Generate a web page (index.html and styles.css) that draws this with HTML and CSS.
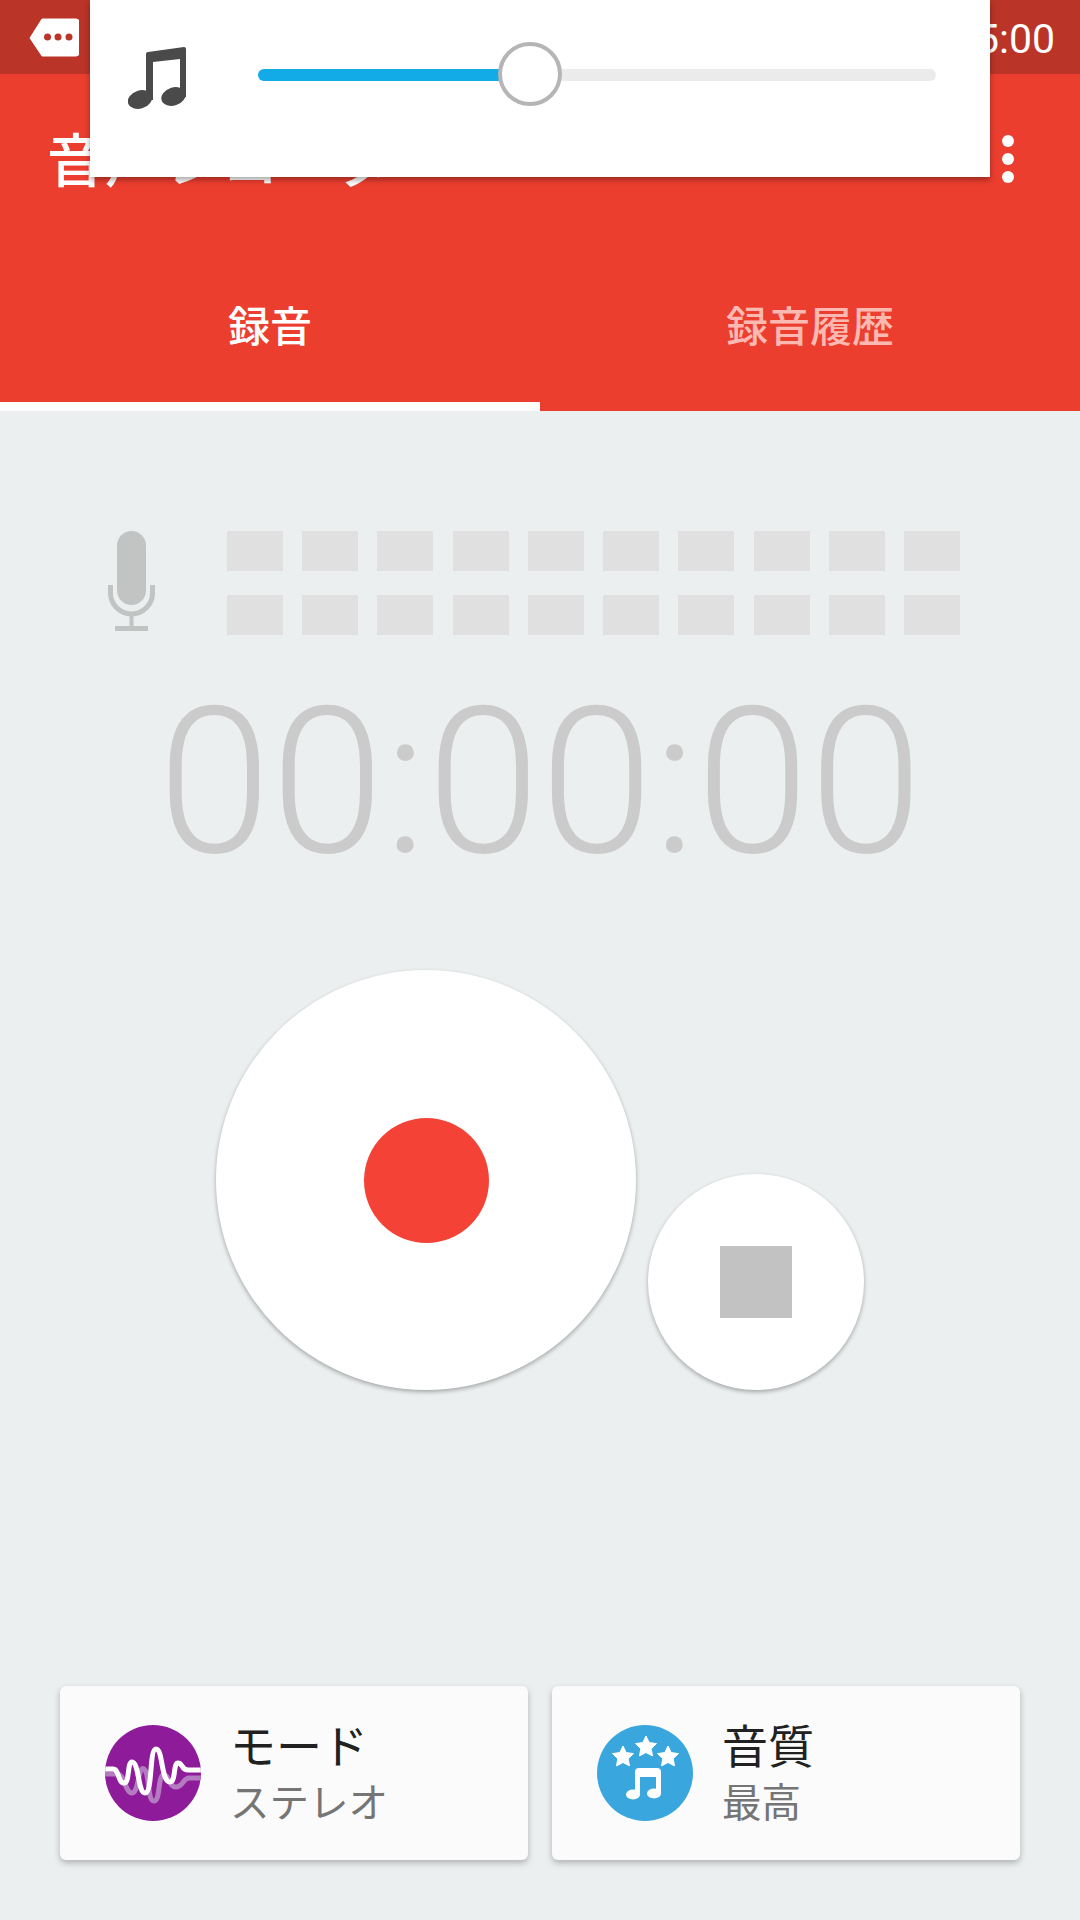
FILE: index.html
```html
<!DOCTYPE html>
<html lang="ja">
<head>
  <meta charset="UTF-8">
  <meta name="viewport" content="width=device-width, initial-scale=1.0">
  <title>音声レコーダー</title>
  <link rel="stylesheet" href="styles.css">
</head>
<body>

  <div class="status-bar">
    <svg class="status-tag" viewBox="0 0 50 39">
      <path d="M13 1 H47 Q50 1 50 4 V35 Q50 38 47 38 H13 L1 20 Z" fill="#fff" stroke="#fff" stroke-linejoin="round"/>
      <circle cx="18.5" cy="19" r="3.5" fill="#ba3527"/>
      <circle cx="29" cy="19" r="3.5" fill="#ba3527"/>
      <circle cx="40" cy="19" r="3.5" fill="#ba3527"/>
    </svg>
    <span class="status-time">15:00</span>
  </div>

  <header class="app-bar">
    <h1 class="app-title">音声レコーダー</h1>
    <div class="more-dots"><i></i><i></i><i></i></div>
  </header>

  <nav class="tabs">
    <div class="tab active">録音</div>
    <div class="tab">録音履歴</div>
  </nav>

  <!-- volume popup, sits over the app bar -->
  <div class="volume-popup">
    <svg class="volume-icon" viewBox="0 0 58 62">
      <path d="M18 7 Q18 5 20 5 L56 0 Q58 0 58 2 V50 H52 V12 L25 15 V53 H18 Z" fill="#4a4a4a"/>
      <ellipse cx="12" cy="52.5" rx="12.5" ry="9" transform="rotate(-18 12 52.5)" fill="#4a4a4a"/>
      <ellipse cx="45.5" cy="49.5" rx="12.5" ry="9" transform="rotate(-18 45.5 49.5)" fill="#4a4a4a"/>
    </svg>
    <div class="slider">
      <div class="slider-fill"></div>
      <div class="slider-thumb"></div>
    </div>
  </div>

  <main class="recorder">
    <section class="meter">
      <svg class="mic" viewBox="0 0 47 100">
        <rect x="9" y="0" width="29" height="74" rx="14.5" fill="#c2c4c4"/>
        <path d="M2.5 54 V62 A21 21 0 0 0 44.5 62 V54" fill="none" stroke="#c2c4c4" stroke-width="5"/>
        <rect x="21.5" y="82" width="4" height="15" fill="#c2c4c4"/>
        <rect x="7" y="95" width="33" height="5" fill="#c2c4c4"/>
      </svg>
      <div class="meter-bars">
        <i></i><i></i><i></i><i></i><i></i><i></i><i></i><i></i><i></i><i></i>
        <i></i><i></i><i></i><i></i><i></i><i></i><i></i><i></i><i></i><i></i>
      </div>
    </section>

    <div class="timer">00:00:00</div>

    <section class="controls">
      <button class="round-btn record"><span class="record-dot"></span></button>
      <button class="round-btn stop"><span class="stop-square"></span></button>
    </section>

    <section class="cards">
      <div class="card">
        <svg class="card-icon" viewBox="0 0 96 96">
          <defs><clipPath id="modeClip"><circle cx="48" cy="48" r="48"/></clipPath></defs>
          <circle cx="48" cy="48" r="48" fill="#8e1c9a"/>
          <g clip-path="url(#modeClip)" fill="none" stroke-linecap="round">
            <path d="M0 49 H12 C20 49 20 68 27 68 C34 68 33 40 39 44 C45 48 42 76 49 76 C56 76 52 48 60 50 C65 52 64 62 71 62 C78 62 78 53 84 53 H96" stroke="#b57bc0" stroke-width="5"/>
            <path d="M0 44 H8 C14 44 13 58 19 58 C25 58 22 37 27 37 C34 37 33 68 40 68 C48 68 44 24 51 24 C58 24 56 57 65 57 C71 57 68 38 73 38 C78 38 76 45 83 45 H96" stroke="#fff" stroke-width="5"/>
          </g>
        </svg>
        <div class="card-text">
          <div class="card-title">モード</div>
          <div class="card-value">ステレオ</div>
        </div>
      </div>
      <div class="card">
        <svg class="card-icon" viewBox="0 0 96 96">
          <defs>
            <polygon id="star" points="0,-11 3.2,-4.4 10.5,-3.4 5.2,1.7 6.5,8.9 0,5.5 -6.5,8.9 -5.2,1.7 -10.5,-3.4 -3.2,-4.4"/>
          </defs>
          <circle cx="48" cy="48" r="48" fill="#39a6dd"/>
          <g fill="#fff" stroke="#fff" stroke-linejoin="round">
            <use href="#star" x="26" y="32"/>
            <use href="#star" x="49" y="22"/>
            <use href="#star" x="71" y="32"/>
          </g>
          <g fill="#fff">
            <path d="M38 47 Q38 43 42 43 H60 Q64 43 64 47 V69 H59 V52 H43 V69 H38 Z"/>
            <ellipse cx="36" cy="69.5" rx="7" ry="5"/>
            <ellipse cx="57" cy="68.5" rx="7" ry="5"/>
          </g>
        </svg>
        <div class="card-text">
          <div class="card-title">音質</div>
          <div class="card-value">最高</div>
        </div>
      </div>
    </section>
  </main>

</body>
</html>
```

FILE: styles.css
```css
body {
  font-family: 'Noto Sans CJK JP', 'Roboto', sans-serif;
  margin: 0;
  width: 1080px;
  height: 1920px;
  overflow: hidden;
  position: relative;
  display: flex;
  flex-direction: column;
  background-color: #ebeff0;
}

.status-bar {
  height: 74px;
  flex-shrink: 0;
  display: flex;
  align-items: center;
  justify-content: space-between;
  padding: 0 25px 0 29px;
  background: #ba3527;
}

.status-tag {
  width: 50px;
  height: 39px;
  margin-top: 1px;
}

.status-time {
  padding-top: 3px;
  font-family: 'Roboto', sans-serif;
  font-size: 41px;
  color: #fff;
}

.app-bar {
  height: 164px;
  flex-shrink: 0;
  display: flex;
  align-items: center;
  justify-content: space-between;
  padding: 0 66px 0 47px;
  background: #ec3e2f;
}

.app-title {
  margin: 2px 0 0;
  font-size: 58px;
  font-weight: 500;
  line-height: 1;
  color: #fff;
}

.more-dots {
  display: flex;
  flex-direction: column;
  gap: 6px;
  margin-top: 6px;
}

.more-dots i {
  display: block;
  width: 12px;
  height: 12px;
  border-radius: 50%;
  background: #fff;
}

.tabs {
  height: 173px;
  flex-shrink: 0;
  display: flex;
  background: #ec3e2f;
}

.tab {
  flex: 1;
  display: flex;
  align-items: center;
  justify-content: center;
  padding-top: 7px;
  border-bottom: 9px solid transparent;
  font-size: 42px;
  font-weight: 500;
  color: #fbb9b2;
}

.tab.active {
  color: #fff;
  border-bottom-color: #fff;
}

.volume-popup {
  position: absolute;
  top: 0;
  left: 90px;
  width: 900px;
  height: 177px;
  display: flex;
  align-items: flex-start;
  background: #fff;
  box-shadow: 0 3px 6px rgba(0,0,0,0.35);
}

.volume-icon {
  width: 58px;
  height: 62px;
  margin: 47px 0 0 38px;
}

.slider {
  position: relative;
  width: 678px;
  height: 12px;
  margin: 69px 0 0 72px;
  border-radius: 6px;
  background: #ebebeb;
}

.slider-fill {
  width: 245px;
  height: 100%;
  border-radius: 6px 0 0 6px;
  background: #12aae7;
}

.slider-thumb {
  position: absolute;
  top: -27px;
  left: 240px;
  width: 56px;
  height: 56px;
  border: 4px solid #b5b5b5;
  border-radius: 50%;
  background: #fff;
}

.recorder {
  flex: 1;
  display: flex;
  flex-direction: column;
  padding: 120px 60px 60px;
}

.meter {
  display: flex;
  align-items: flex-start;
  padding-left: 48px;
}

.mic {
  width: 47px;
  height: 100px;
  flex-shrink: 0;
}

.meter-bars {
  width: 733px;
  margin-left: 72px;
  display: grid;
  grid-template-columns: repeat(10, 1fr);
  grid-auto-rows: 40px;
  gap: 24px 19.2px;
}

.meter-bars i {
  background: #e0e0e0;
}

.timer {
  margin-top: 28px;
  font-family: 'Roboto', sans-serif;
  font-size: 204px;
  font-weight: 300;
  line-height: 240px;
  text-align: center;
  color: #cbcbcb;
}

.controls {
  margin-top: 67px;
  display: flex;
  align-items: flex-end;
  justify-content: center;
  gap: 12px;
}

.round-btn {
  display: flex;
  align-items: center;
  justify-content: center;
  padding: 0;
  border: none;
  border-radius: 50%;
  background: #fff;
  box-shadow: 0 2px 4px rgba(0,0,0,0.3);
}

.record {
  width: 420px;
  height: 420px;
}

.record-dot {
  width: 125px;
  height: 125px;
  border-radius: 50%;
  background: #f44336;
}

.stop {
  width: 216px;
  height: 216px;
}

.stop-square {
  width: 72px;
  height: 72px;
  background: #c2c2c2;
}

.cards {
  margin-top: auto;
  display: grid;
  grid-template-columns: 1fr 1fr;
  gap: 24px;
}

.card {
  height: 174px;
  display: flex;
  align-items: center;
  gap: 29px;
  padding-left: 45px;
  border-radius: 6px;
  background: #fbfbfb;
  box-shadow: 0 3px 6px rgba(0,0,0,0.25);
}

.card-icon {
  width: 96px;
  height: 96px;
  flex-shrink: 0;
}

.card-text {
  margin-top: -6px;
}

.card-title {
  font-size: 46px;
  line-height: 60px;
  color: #212121;
}

.card-value {
  font-size: 39.5px;
  line-height: 54px;
  color: #757575;
}
```
